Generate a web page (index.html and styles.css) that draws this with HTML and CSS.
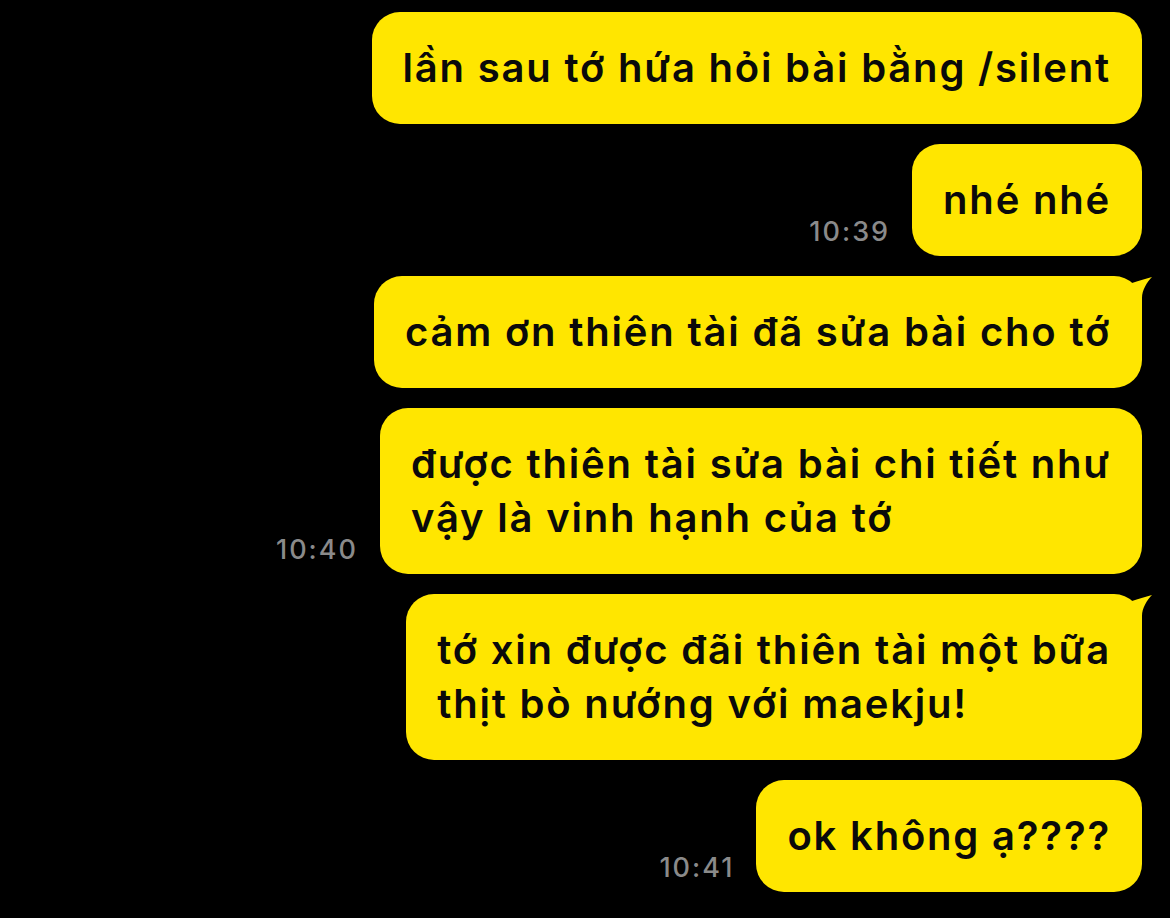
FILE: index.html
```html
<!DOCTYPE html>
<html lang="vi">
<head>
  <meta charset="UTF-8">
  <meta name="viewport" content="width=device-width, initial-scale=1.0">
  <title>Chat</title>
  <link rel="stylesheet" href="styles.css">
</head>
<body>
  <div class="chat">
    <div class="msg">
      <div class="bubble">lần sau tớ hứa hỏi bài bằng /silent</div>
    </div>
    <div class="msg">
      <span class="time">10:39</span>
      <div class="bubble">nhé nhé</div>
    </div>
    <div class="msg">
      <div class="bubble">
        cảm ơn thiên tài đã sửa bài cho tớ
        <svg class="tail" viewBox="0 0 28 32" width="28" height="32"><path d="M4 7 C10 5 17 3 24 1 C19 6 14 14 14 22 L14 32 L4 32 Z"/></svg>
      </div>
    </div>
    <div class="msg">
      <span class="time">10:40</span>
      <div class="bubble">được thiên tài sửa bài chi tiết như<br>vậy là vinh hạnh của tớ</div>
    </div>
    <div class="msg">
      <div class="bubble">
        tớ xin được đãi thiên tài một bữa<br>thịt bò nướng với maekju!
        <svg class="tail" viewBox="0 0 28 32" width="28" height="32"><path d="M4 7 C10 5 17 3 24 1 C19 6 14 14 14 22 L14 32 L4 32 Z"/></svg>
      </div>
    </div>
    <div class="msg">
      <span class="time">10:41</span>
      <div class="bubble">ok không ạ????</div>
    </div>
  </div>
</body>
</html>
```

FILE: styles.css
```css
body {
  margin: 0;
  background: #000;
  font-family: Inter, "Liberation Sans", sans-serif;
}
.chat {
  display: flex;
  flex-direction: column;
  align-items: flex-end;
  gap: 20px;
  padding: 12px 28px 0 0;
}
.msg {
  display: flex;
  align-items: flex-end;
  gap: 22px;
}
.time {
  color: #8a8a8a;
  font-size: 27px;
  font-weight: 500;
  line-height: 1;
  letter-spacing: 2px;
  margin-bottom: 11px;
}
.bubble {
  position: relative;
  box-sizing: border-box;
  max-width: 800px;
  background: #ffe600;
  color: #0a0a0a;
  border-radius: 28px;
  padding: 29px 31px;
  font-size: 40px;
  font-weight: 600;
  line-height: 54px;
  letter-spacing: 1.8px;
  white-space: nowrap;
}
.tail {
  position: absolute;
  top: 0;
  right: -14px;
  fill: #ffe600;
}
```
